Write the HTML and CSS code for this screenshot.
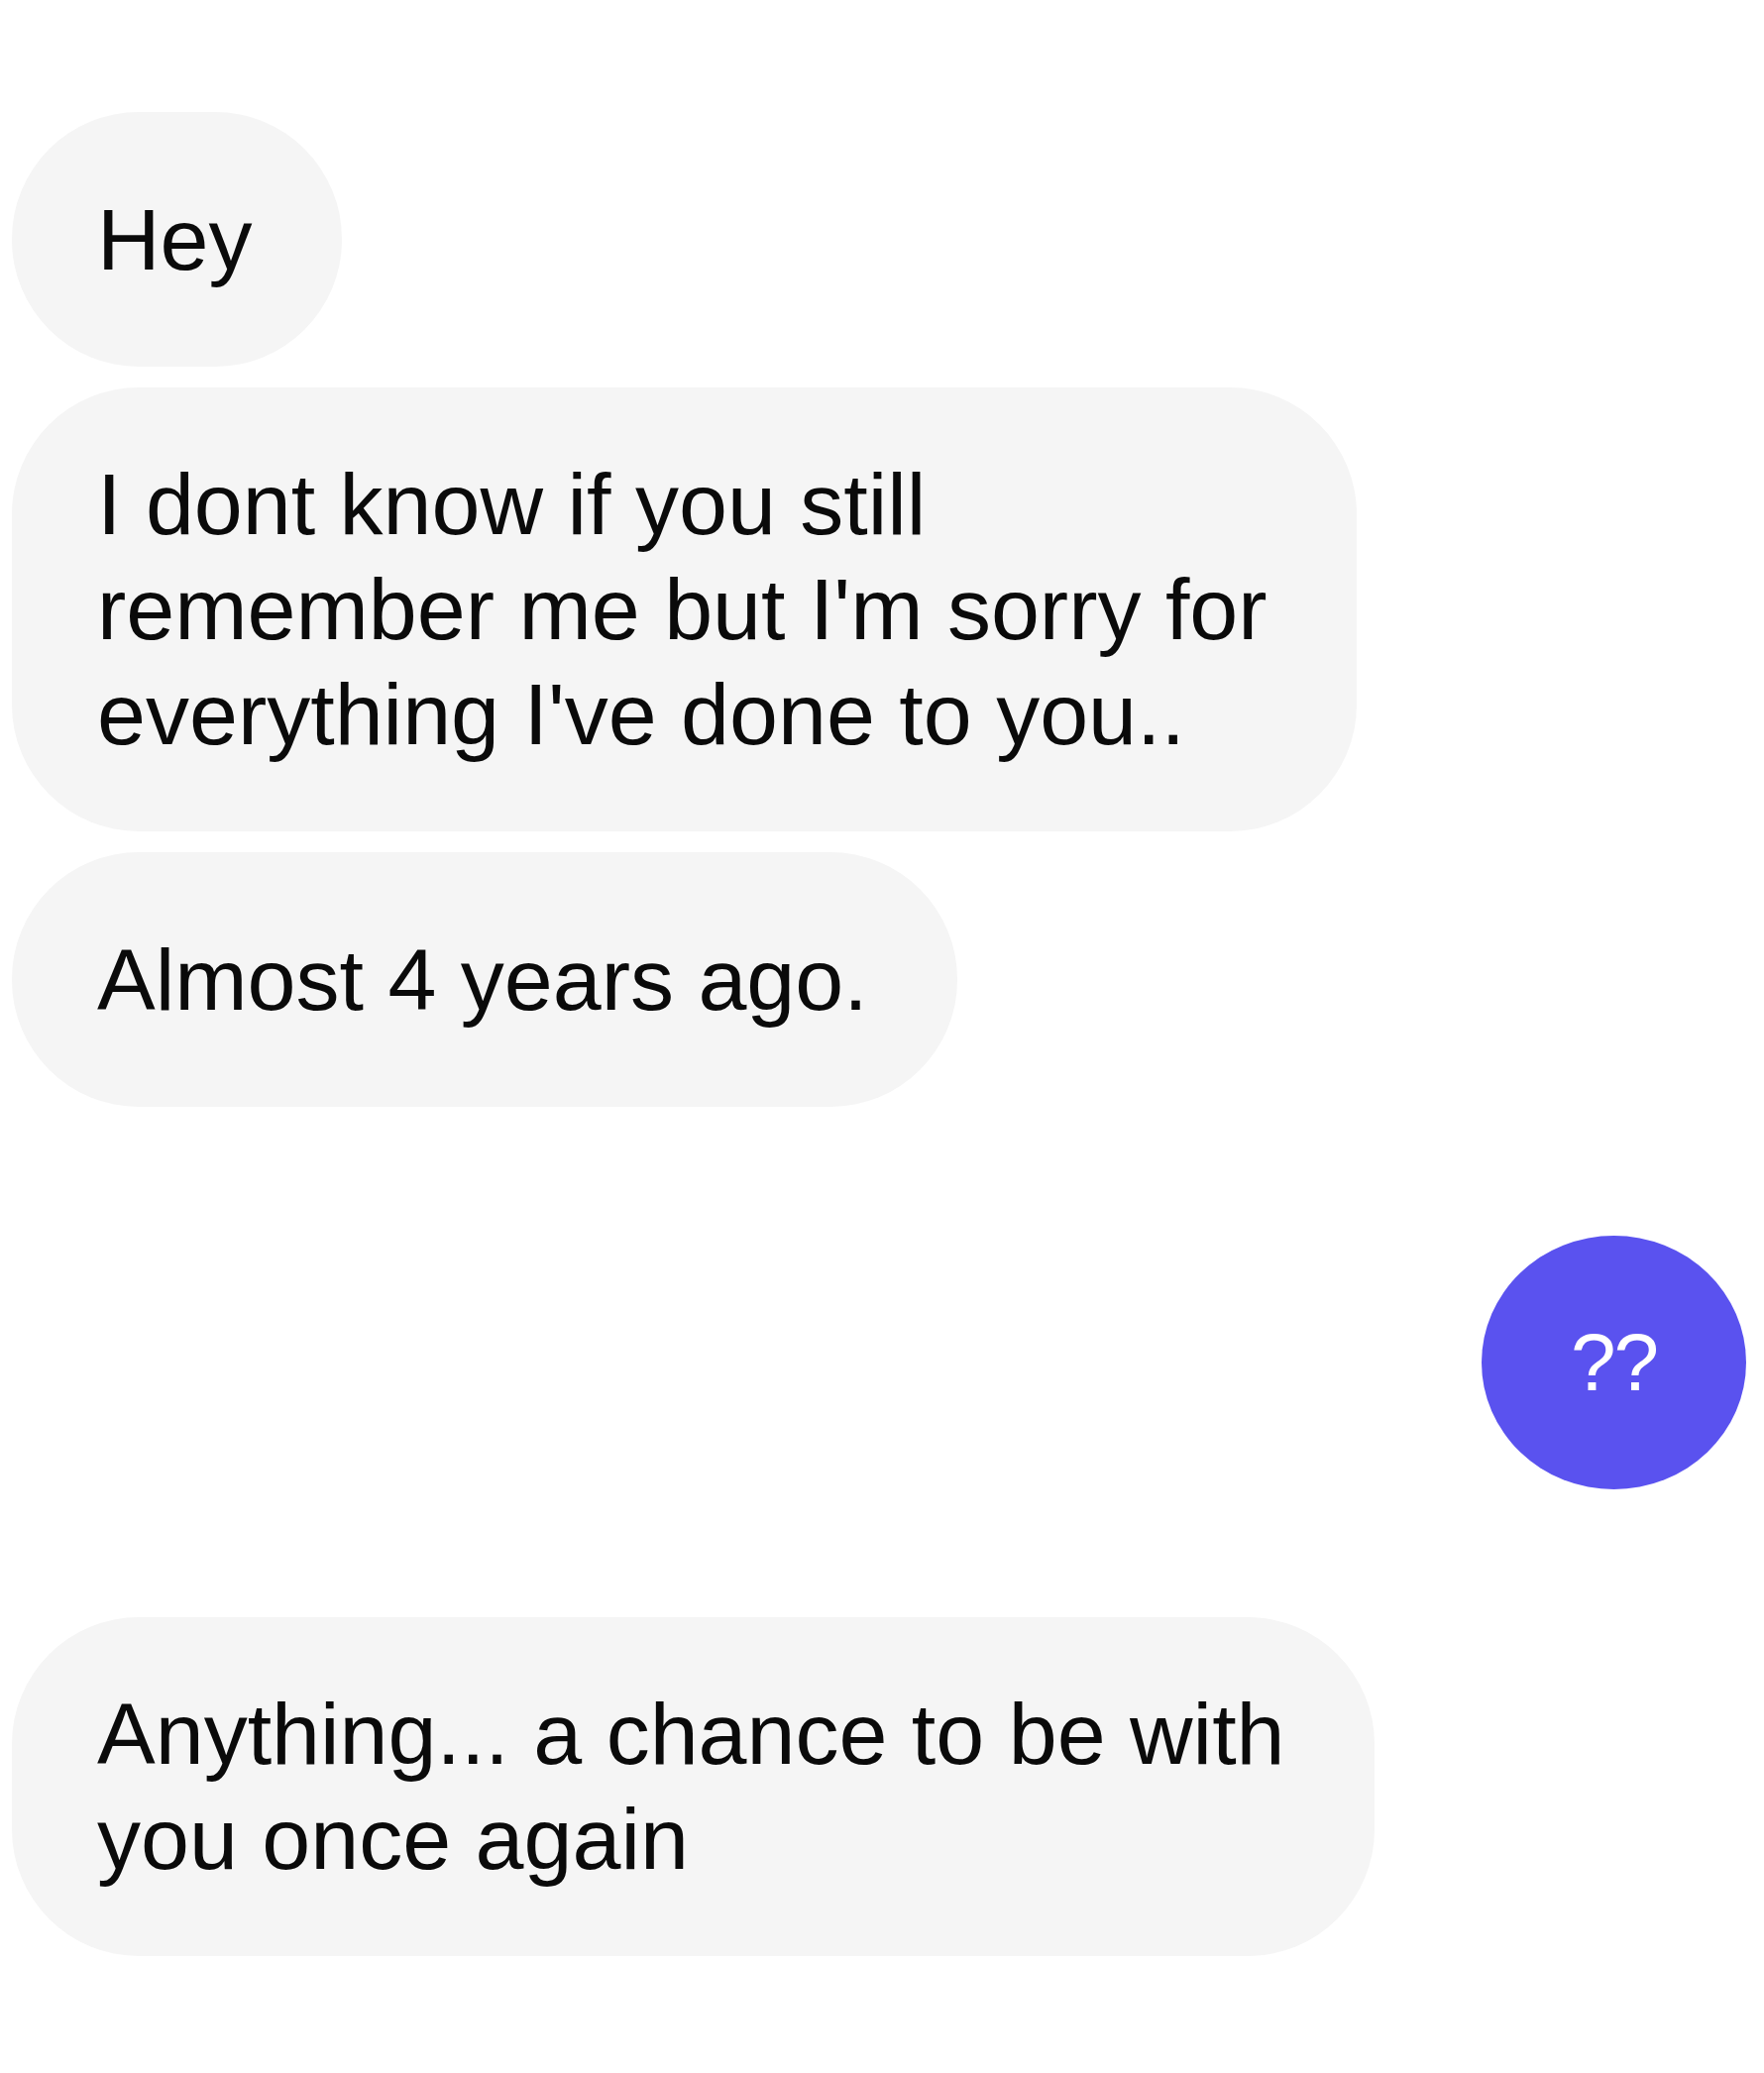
FILE: index.html
```html
<!DOCTYPE html>
<html lang="en">
<head>
<meta charset="utf-8">
<title>Messages</title>
<link rel="stylesheet" href="styles.css">
</head>
<body>
<main class="thread">
  <div class="msg in single">Hey</div>
  <div class="msg in">I dont know if you still<br>remember me but I'm sorry for<br>everything I've done to you..</div>
  <div class="msg in single">Almost 4 years ago.</div>
  <div class="msg out">??</div>
  <div class="msg in">Anything... a chance to be with<br>you once again</div>
</main>
</body>
</html>
```

FILE: styles.css
```css
html, body {
  margin: 0;
  padding: 0;
  background: #ffffff;
}

body {
  width: 1780px;
  min-height: 2092px;
  font-family: "Liberation Sans", Arial, sans-serif;
  color: #0a0a0a;
}

.thread {
  display: flex;
  flex-direction: column;
  align-items: flex-start;
  padding: 113px 18px 0 12px;
}

.msg {
  box-sizing: border-box;
  display: flex;
  align-items: center;
  font-size: 88px;
  line-height: 106px;
  white-space: nowrap;
}

.in {
  background: #f5f5f5;
  border-radius: 128px;
  padding: 65px 90px 65px 86px;
  min-height: 257px;
}

.in + .in {
  margin-top: 21px;
}

.out {
  align-self: flex-end;
  justify-content: center;
  width: 267px;
  height: 256px;
  margin-top: 130px;
  margin-bottom: 129px;
  border-radius: 50%;
  background: #5a52ef;
  color: #ffffff;
  font-size: 82px;
  line-height: 82px;
  letter-spacing: -2px;
}
```
